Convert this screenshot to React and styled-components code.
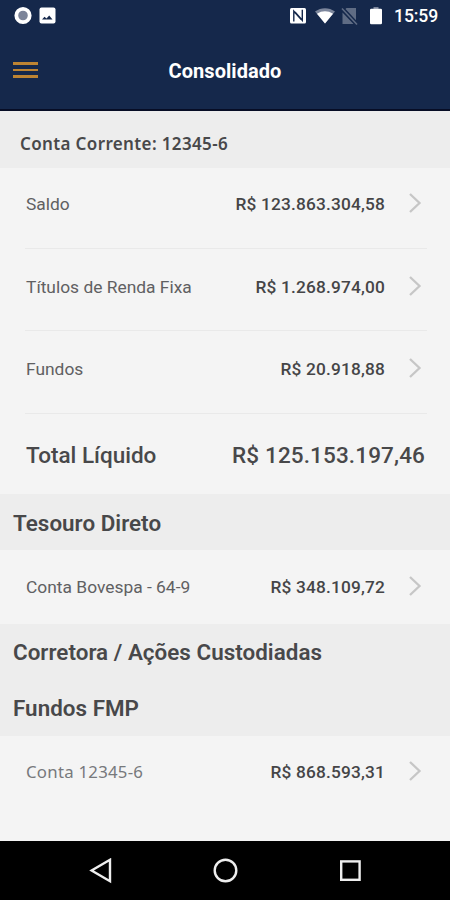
import React from 'react';
import styled, { createGlobalStyle } from 'styled-components';

const GlobalStyle = createGlobalStyle`
  * { box-sizing: border-box; }
  body { margin: 0; background: #f4f4f4; }
`;

const Screen = styled.div`
  display: flex;
  flex-direction: column;
  width: 450px;
  height: 900px;
  overflow: hidden;
  background: #f4f4f4;
  color: #48484a;
  font-family: Roboto, "Liberation Sans", sans-serif;
`;

const Header = styled.header`
  flex: none;
  height: 111px;
  background: #15284b;
  border-bottom: 2px solid #070d25;
  color: #fff;
`;

const StatusBar = styled.div`
  display: flex;
  justify-content: space-between;
  height: 32px;
  padding: 0 12px 0 13px;
`;

const StatusGroup = styled.div`
  display: flex;
  align-items: center;
`;

const StatusIcons = styled.svg`
  display: block;
  flex: none;
`;

const Clock = styled.time`
  width: 44px;
  margin-left: 11px;
  font-size: 17.6px;
  font-weight: 500;
  line-height: 32px;
  letter-spacing: -0.1px;
  white-space: nowrap;
`;

const AppBar = styled.div`
  display: grid;
  grid-template-columns: 26px 1fr 26px;
  align-items: center;
  height: 78px;
  padding: 0 12px;
`;

const MenuButton = styled.button`
  display: flex;
  flex-direction: column;
  gap: 3.5px;
  padding: 0 0 2px 1px;
  border: 0;
  background: none;
`;

const MenuLine = styled.span`
  width: 25px;
  height: 2.8px;
  background: #bd8433;
`;

const Title = styled.h1`
  margin: 0;
  font-size: 20px;
  font-weight: 700;
  line-height: 24px;
  letter-spacing: 0.05px;
  text-align: center;
`;

const Content = styled.main`
  flex: 1;
  min-height: 0;
`;

const Section = styled.h2`
  display: flex;
  align-items: center;
  height: ${(p) => p.$height}px;
  margin: 0;
  padding: ${(p) => (p.$account ? '7px 0 0 20px' : `${p.$raised ? 0 : 1}px 0 ${p.$raised ? 1 : 0}px 13px`)};
  background: #ededed;
  font-family: ${(p) => (p.$account ? '"Noto Sans", "Open Sans", sans-serif' : 'inherit')};
  font-size: ${(p) => (p.$account ? 17 : 22.4)}px;
  font-weight: 600;
  letter-spacing: ${(p) => (p.$account ? 0.36 : 0.03)}px;
  white-space: nowrap;
`;

const Row = styled.div`
  display: flex;
  align-items: center;
  height: ${(p) => p.$height}px;
  margin: 0 23px 0 25px;
  padding-bottom: ${(p) => p.$lift || 0}px;
  border-bottom: ${(p) => (p.$divider ? '1px solid #e9e9e9' : '0')};
`;

const Label = styled.span`
  flex: 1;
  padding-left: 1px;
  color: ${(p) => (p.$sans ? '#77797c' : '#606062')};
  font-family: ${(p) => (p.$sans ? '"Noto Sans", "Open Sans", sans-serif' : 'inherit')};
  font-size: ${(p) => (p.$sans ? 16.8 : 17.4)}px;
  font-weight: 400;
  letter-spacing: ${(p) => (p.$sans ? 0.25 : 0)}px;
  white-space: nowrap;
`;

const Amount = styled.span`
  margin-right: 0.5px;
  color: #454547;
  font-size: 17.3px;
  font-weight: 500;
  letter-spacing: 0.18px;
  white-space: nowrap;
`;

const Chevron = styled.svg`
  display: block;
  width: 14px;
  height: 22px;
  margin: 0 5px 2px 22.5px;
`;

const TotalRow = styled.div`
  display: flex;
  align-items: center;
  justify-content: space-between;
  height: 80px;
  padding: 2px 25px 0 26px;
  font-size: 22.5px;
  font-weight: 500;
  white-space: nowrap;
`;

const TotalText = styled.span`
  letter-spacing: ${(p) => p.$spacing || 0}px;
`;

const NavBar = styled.nav`
  display: flex;
  flex: none;
  align-items: center;
  justify-content: space-between;
  height: 59px;
  padding: 0 88px;
  background: #000;
`;

const NavIcon = styled.svg`
  display: block;
  width: 26px;
  height: 26px;
  fill: none;
  stroke: #eee;
  stroke-width: 2.4;
`;

function Entry({ label, amount, height, lift, divider, sans }) {
  return (
    <Row $height={height} $lift={lift} $divider={divider}>
      <Label $sans={sans}>{label}</Label>
      <Amount>{amount}</Amount>
      <Chevron viewBox="0 0 14 22" fill="none" stroke="#c6c6c6" strokeWidth="2.3">
        <path d="M2 2 L11.5 11 L2 20" />
      </Chevron>
    </Row>
  );
}

export default function App() {
  return (
    <Screen>
      <GlobalStyle />
      <Header>
        <StatusBar>
          <StatusGroup>
            <StatusIcons width="44" height="32" viewBox="13 0 44 32">
              <circle cx="23" cy="15.5" r="6.7" fill="#7c8499" stroke="#fff" strokeWidth="3.8" />
              <rect x="39.5" y="7.5" width="16" height="16" rx="2" fill="#fff" />
              <path d="M42 19.5 L44.5 16.8 L46.5 18.5 L49.2 15.5 L52.5 19.5Z" fill="#15284b" />
            </StatusIcons>
          </StatusGroup>
          <StatusGroup>
            <StatusIcons width="95" height="32" viewBox="288 0 95 32">
              <rect x="290" y="8" width="16" height="15.5" rx="1.5" fill="#fff" />
              <path d="M293.8 21.5 V11.2 L301.2 19.5 M302.3 9.8 V20.3 L295 12" fill="none" stroke="#15284b" strokeWidth="1.4" />
              <path d="M315 11.5 C321 7 329 7 335 11.5 L325 23.5Z" fill="#7c869c" />
              <path d="M317 13.8 C322 10.5 328 10.5 333 13.8 L325 23.5Z" fill="#fff" />
              <path d="M346.5 8 H356 V20.2 L345.5 9Z M342.5 12.5 L353.5 24 H342.5Z" fill="#5f6c84" />
              <path d="M342 8.5 L357 24.5" stroke="#5f6c84" strokeWidth="1.5" />
              <path d="M373.5 7 H378.5 V9 H373.5Z" fill="#7c869c" />
              <rect x="370" y="8.8" width="12" height="15.5" rx="1.3" fill="#fff" />
            </StatusIcons>
            <Clock>15:59</Clock>
          </StatusGroup>
        </StatusBar>
        <AppBar>
          <MenuButton aria-label="Menu">
            <MenuLine />
            <MenuLine />
            <MenuLine />
          </MenuButton>
          <Title>Consolidado</Title>
        </AppBar>
      </Header>
      <Content>
        <Section $account $height={57}>Conta Corrente: 12345-6</Section>
        <Entry label="Saldo" amount="R$ 123.863.304,58" height={81} lift={8} divider />
        <Entry label="Títulos de Renda Fixa" amount="R$ 1.268.974,00" height={82} lift={6} divider />
        <Entry label="Fundos" amount="R$ 20.918,88" height={83} lift={6} divider />
        <TotalRow>
          <TotalText>Total Líquido</TotalText>
          <TotalText $spacing={0.13}>R$ 125.153.197,46</TotalText>
        </TotalRow>
        <Section $height={56}>Tesouro Direto</Section>
        <Entry label="Conta Bovespa - 64-9" amount="R$ 348.109,72" height={74} />
        <Section $height={56} $raised>Corretora / Ações Custodiadas</Section>
        <Section $height={56} $raised>Fundos FMP</Section>
        <Entry label="Conta 12345-6" amount="R$ 868.593,31" height={71} sans />
      </Content>
      <NavBar>
        <NavIcon viewBox="88 857.5 26 26"><path d="M110 859.3 V880.7 L91.6 870Z" /></NavIcon>
        <NavIcon viewBox="212 857.5 26 26"><circle cx="225.5" cy="870" r="10.8" /></NavIcon>
        <NavIcon viewBox="336 857.5 26 26"><rect x="341.2" y="860.9" width="18.4" height="18.4" /></NavIcon>
      </NavBar>
    </Screen>
  );
}
